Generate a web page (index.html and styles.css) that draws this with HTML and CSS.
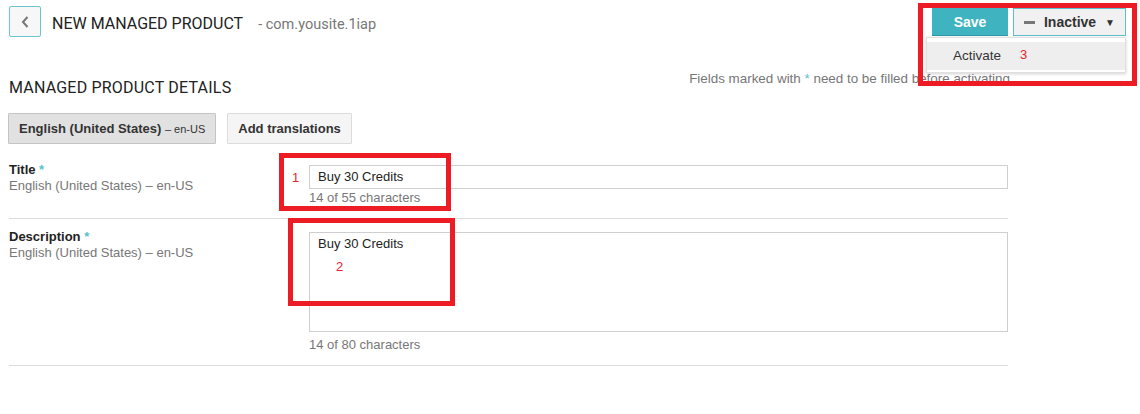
FILE: index.html
```html
<!DOCTYPE html>
<html>
<head>
<meta charset="utf-8">
<link rel="stylesheet" href="styles.css">
</head>
<body>
<div class="page">
  <header class="topbar">
    <button class="back" aria-label="Back">
      <svg width="10" height="14" viewBox="0 0 10 14"><path d="M7.5 2 L3 7 L7.5 12" fill="none" stroke="#777" stroke-width="2"/></svg>
    </button>
    <h1 class="page-title">NEW MANAGED PRODUCT</h1>
    <span class="pkg">- com.yousite.1iap</span>
    <div class="actions">
      <button class="btn-save">Save</button>
      <div class="status-wrap">
        <button class="btn-status"><span class="dash"></span>Inactive<span class="caret">&#9660;</span></button>
        <div class="menu">
          <div class="menu-item">Activate</div>
        </div>
      </div>
    </div>
  </header>

  <main class="content">
    <div class="section-head">
      <h2 class="section-title">MANAGED PRODUCT DETAILS</h2>
      <span class="hint">Fields marked with <span class="star">*</span> need to be filled before activating</span>
    </div>

    <div class="tabs">
      <button class="tab active">English (United States) <span class="tab-sub">– en-US</span></button>
      <button class="tab">Add translations</button>
    </div>

    <div class="row">
      <div class="label">
        <div class="label-main">Title <span class="star">*</span></div>
        <div class="label-sub">English (United States) – en-US</div>
      </div>
      <div class="field">
        <div class="input">Buy 30 Credits</div>
        <div class="counter">14 of 55 characters</div>
      </div>
    </div>

    <div class="row">
      <div class="label">
        <div class="label-main">Description <span class="star">*</span></div>
        <div class="label-sub">English (United States) – en-US</div>
      </div>
      <div class="field">
        <div class="textarea">Buy 30 Credits</div>
        <div class="counter counter-gap">14 of 80 characters</div>
      </div>
    </div>
  </main>
</div>

<div class="mark mark1"></div>
<div class="mark mark2"></div>
<div class="mark mark3"></div>
<span class="num num1">1</span>
<span class="num num2">2</span>
<span class="num num3">3</span>
</body>
</html>
```

FILE: styles.css
```css
* { box-sizing: border-box; }
html, body { margin: 0; padding: 0; background: #fff; }
body {
  font-family: "Liberation Sans", Arial, sans-serif;
  font-size: 13px;
  color: #333;
  width: 1140px;
  height: 414px;
  position: relative;
  overflow: hidden;
}
button { font-family: inherit; cursor: pointer; }

.topbar {
  display: flex;
  align-items: center;
  height: 42px;
  padding: 6px 14px 0 9px;
}
.back {
  width: 32px;
  height: 31px;
  border: 1px solid #6cc6d2;
  border-radius: 2px;
  background: #f7f7f7;
  display: flex;
  align-items: center;
  justify-content: center;
  padding: 0;
  align-self: flex-start;
}
.page-title {
  margin: 0 0 0 11px;
  font-family: Roboto, "Liberation Sans", sans-serif;
  font-weight: 400;
  font-size: 16px;
  color: #222;
  position: relative;
  top: -1px;
}
.pkg {
  margin-left: 15px;
  font-family: Roboto, "Liberation Sans", sans-serif;
  font-size: 14.5px;
  color: #777;
}
.actions {
  margin-left: auto;
  display: flex;
  gap: 5px;
  align-self: flex-start;
  margin-top: 2px;
}
.btn-save {
  width: 76px;
  height: 28px;
  background: #40b3c1;
  border: none;
  border-bottom: 1px solid #2f98a6;
  color: #fff;
  font-weight: bold;
  font-size: 14px;
}
.status-wrap { position: relative; }
.btn-status {
  width: 113px;
  height: 28px;
  background: #f1f1f1;
  border: 1px solid #5dbfcc;
  color: #333;
  font-weight: bold;
  font-size: 14px;
  display: flex;
  align-items: center;
  justify-content: center;
  padding: 0;
}
.dash {
  display: inline-block;
  width: 11px;
  height: 3px;
  background: #777;
  margin-right: 9px;
}
.caret {
  font-size: 10px;
  margin-left: 9px;
  color: #333;
}
.menu {
  position: absolute;
  top: 29px;
  right: 0;
  width: 200px;
  height: 36px;
  background: #fff;
  border: 1px solid #e0e0e0;
  box-shadow: 0 1px 3px rgba(0,0,0,0.18);
  padding: 4px 0 2px;
  z-index: 5;
}
.menu-item {
  background: #eeeeee;
  height: 28px;
  line-height: 28px;
  padding-left: 26px;
  color: #333;
  font-size: 13.5px;
}

.content {
  width: 999px;
  margin-left: 9px;
}
.section-head {
  display: flex;
  justify-content: space-between;
  align-items: flex-start;
  margin-top: 29px;
}
.section-title {
  margin: 7px 0 0;
  font-family: Roboto, "Liberation Sans", sans-serif;
  font-weight: 400;
  font-size: 16px;
  letter-spacing: 0.2px;
  color: #222;
}
.hint {
  color: #777;
  font-size: 13.4px;
  margin-right: -2px;
}
.star { color: #5bbfcc; }

.tabs {
  display: flex;
  gap: 11px;
  margin-top: 16px;
  margin-left: -1px;
}
.tab {
  height: 31px;
  padding: 0 10px;
  background: #f5f5f5;
  border: 1px solid #dcdcdc;
  border-radius: 1px;
  font-weight: bold;
  font-size: 13px;
  color: #333;
  white-space: nowrap;
}
.tab.active {
  background: #e1e1e1;
  border-color: #c4c4c4;
}
.tab-sub {
  font-weight: normal;
  font-size: 11px;
}

.row {
  display: flex;
  padding: 13px 0 12px;
  border-bottom: 1px solid #dcdcdc;
}
.tabs + .row { margin-top: 8px; }
.label {
  width: 300px;
  margin-top: -3px;
  line-height: 16px;
}
.label-main {
  font-weight: bold;
  color: #222;
}
.label-sub { color: #777; }
.field { flex: 1; }
.input {
  height: 24px;
  border: 1px solid #cfcfcf;
  padding: 0 8px;
  line-height: 22px;
  color: #222;
}
.textarea {
  height: 100px;
  border: 1px solid #cfcfcf;
  padding: 2px 8px;
  line-height: 18px;
  color: #222;
}
.counter {
  line-height: 16px;
  color: #777;
  margin-top: 1px;
}
.counter-gap { margin-top: 5px; }

.mark {
  position: absolute;
  border: 5px solid #ed1c24;
  pointer-events: none;
  z-index: 10;
}
.mark1 { left: 279px; top: 153px; width: 172px; height: 58px; }
.mark2 { left: 288px; top: 218px; width: 167px; height: 88px; }
.mark3 { left: 918px; top: 3px; width: 219px; height: 83px; }
.num {
  position: absolute;
  color: #e8232b;
  font-size: 13px;
  line-height: 16px;
  z-index: 10;
}
.num1 { left: 292px; top: 170px; }
.num2 { left: 336px; top: 259px; }
.num3 { left: 1020px; top: 47px; }
```
